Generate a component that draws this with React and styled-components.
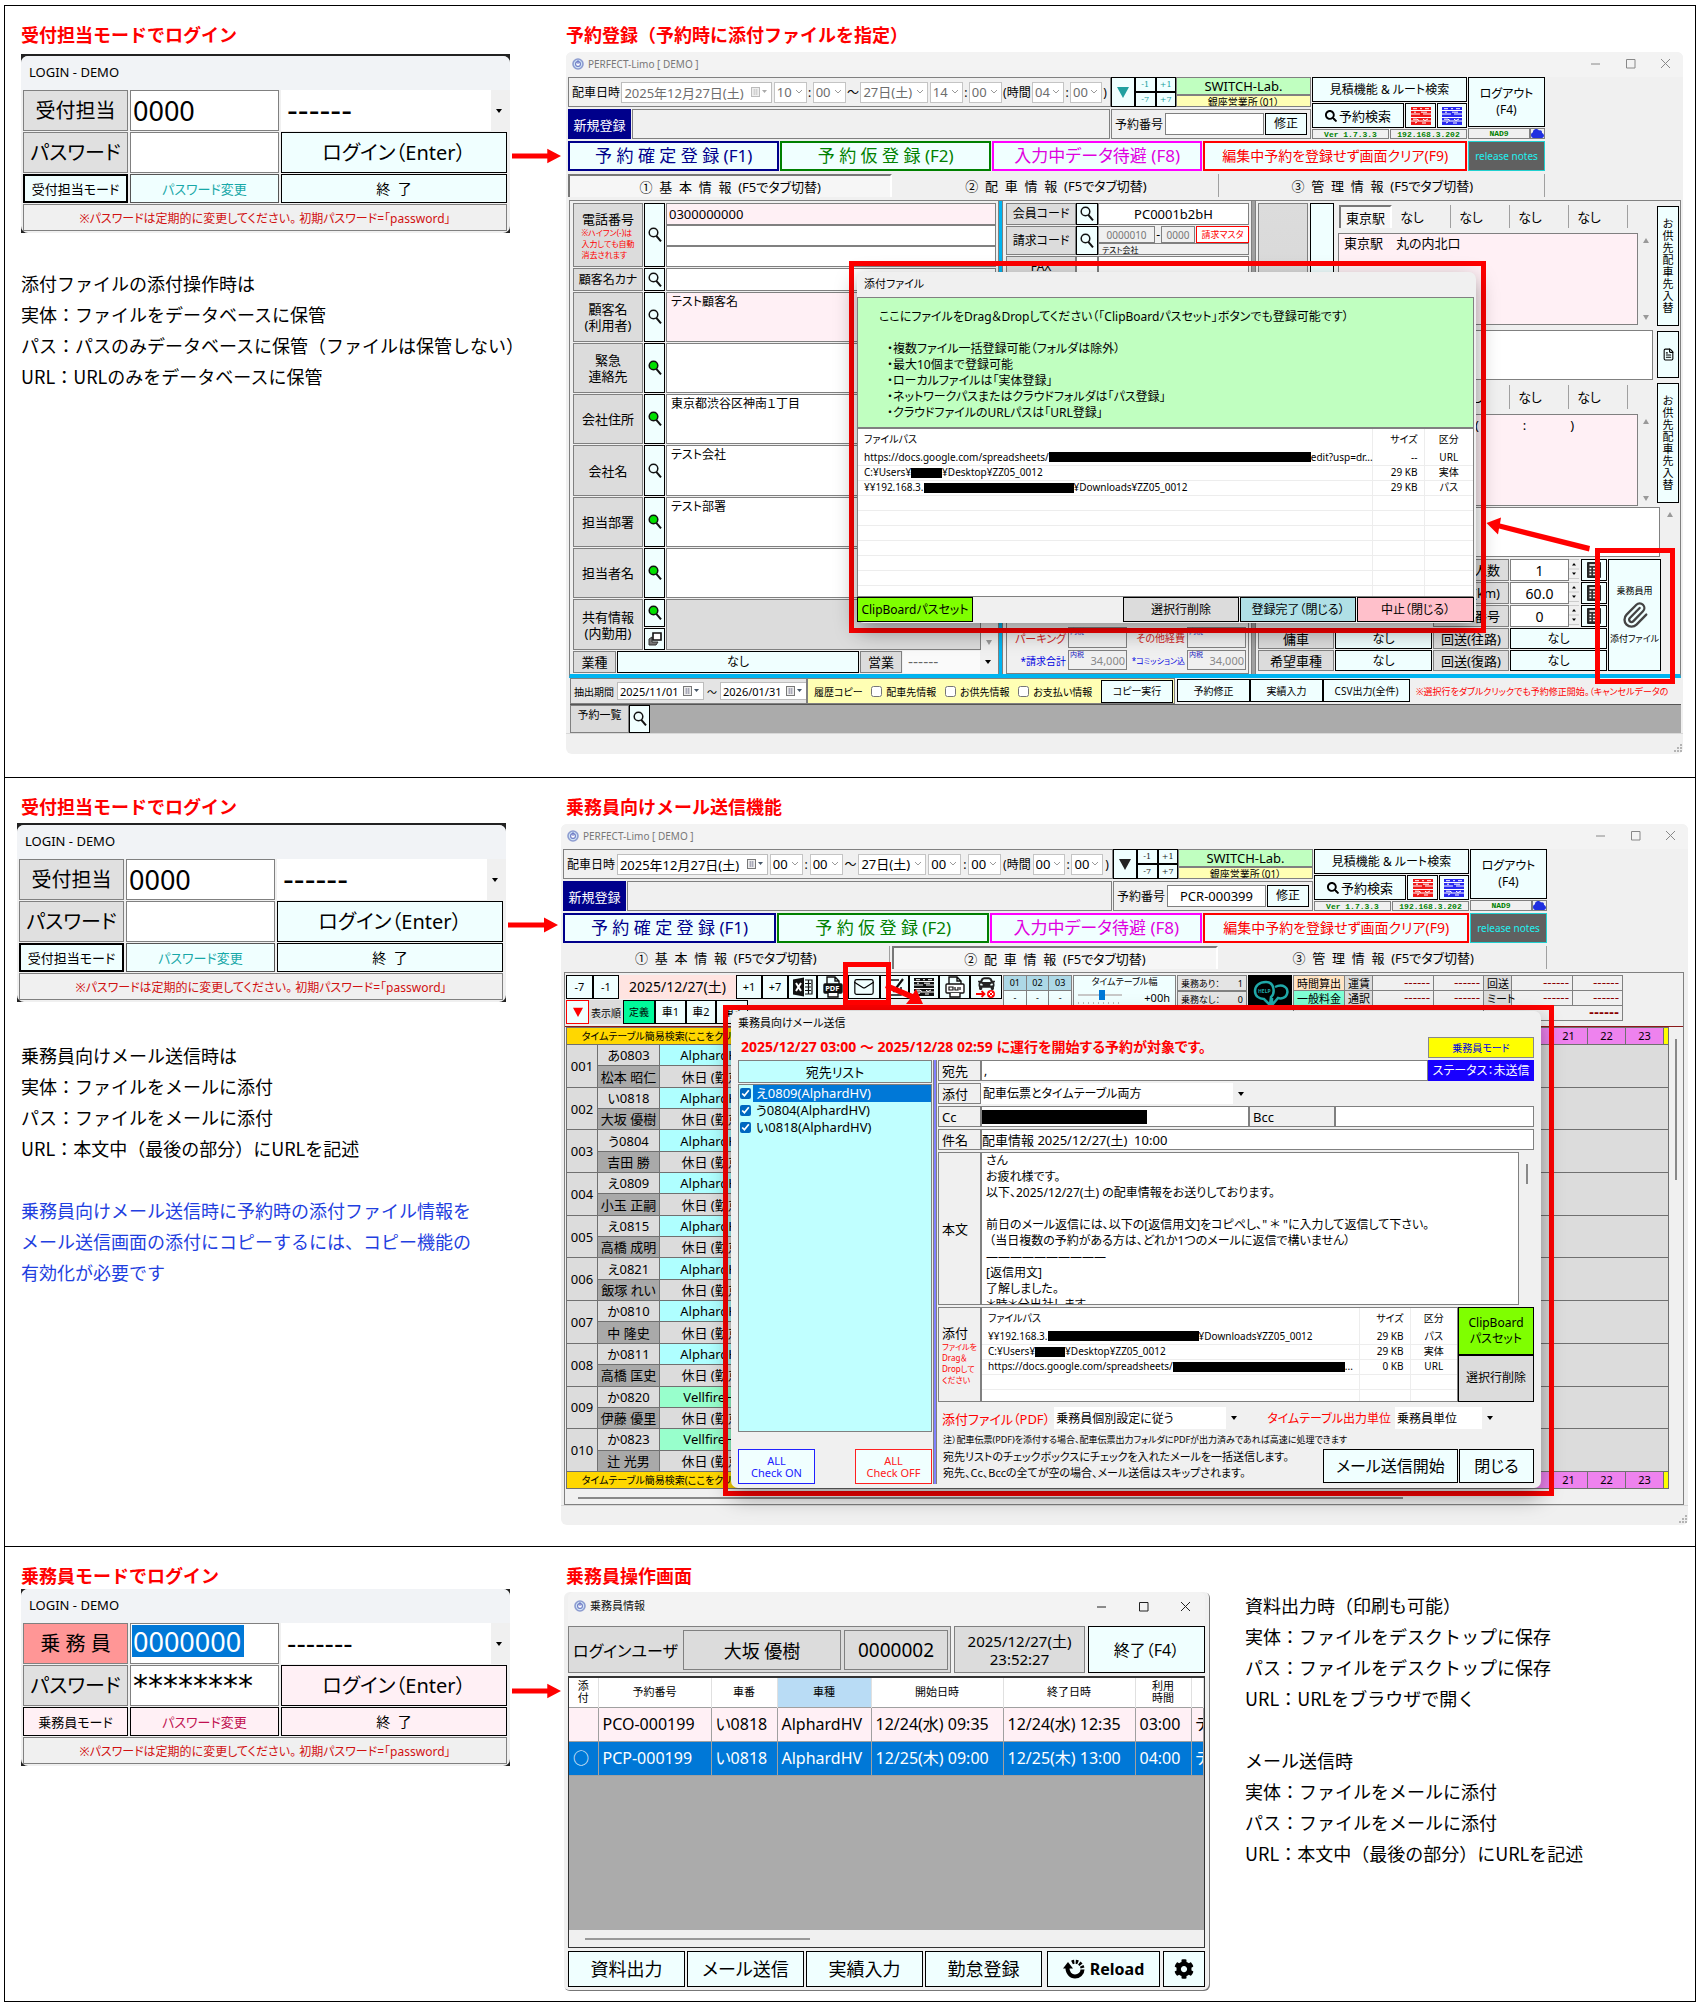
import React from "react";
import styled, { createGlobalStyle, css } from "styled-components";
import { Paperclip, Mail, FileText } from "lucide-react";
import { FaCar, FaCog, FaCloud, FaSearch } from "react-icons/fa";

const UI = `"Noto Sans", "Noto Sans CJK JP", sans-serif`;
const DOC = `"Noto Sans CJK JP", sans-serif`;
const DASH = `"DejaVu Sans", "Noto Sans CJK JP", sans-serif`;

const c = {
  azure: "#f0ffff",
  rose: "#fff0f5",
  face: "#f0f0f0",
  label: "#dcdcdc",
  line: "#808080",
  red: "#ff0000",
  select: "#0078d7",
};

const Global = createGlobalStyle`
  *, *::before, *::after { box-sizing: border-box; }
  body { margin: 0; background: #fff; color: #000; font-family: ${UI}; font-size: 12px; }
  button, input, select, textarea { font: inherit; font-feature-settings: inherit; color: inherit; margin: 0; border-radius: 0; }
  h2, p { margin: 0; }
`;

/* ---------- page ---------- */

const Page = styled.main`
  padding: 5px 7px 6px 4px;
`;
const Sheet = styled.div`
  border: 1px solid #000;
`;
const Section = styled.section`
  display: grid;
  grid-template-columns: 556px minmax(0, 1fr);
  padding-bottom: ${(p) => p.$bottom}px;
  & + & { border-top: 1px solid #000; }
`;
const Side = styled.div`
  padding-left: 16px;
  min-width: 0;
`;
const Stage = styled.div`
  min-width: 0;
`;
const Heading = styled.h2`
  padding: 14px 0 0 ${(p) => p.$indent || 0}px;
  color: ${c.red};
  font: bold 18px/28px ${DOC};
`;
const Notes = styled.div`
  margin-top: ${(p) => p.$top || 0}px;
  font: 18px/31px ${DOC};
`;
const Blue = styled.p`
  margin-top: 31px;
  color: #1f3fe0;
`;
const Gap = styled.p`
  height: 31px;
`;
const LoginLine = styled.div`
  display: flex;
  margin: ${(p) => p.$top}px 0 0 ${(p) => -(p.$outdent || 0)}px;
`;
const ArrowSlot = styled.svg`
  flex: 1;
  min-width: 0;
  height: 16px;
  margin: 94px 0 0 2px;
`;

function RightArrow() {
  return (
    <ArrowSlot viewBox="0 0 50 16" preserveAspectRatio="xMinYMid meet" aria-hidden="true">
      <path d="M0 5.5H36V0.5L50 8L36 15.5V10.5H0Z" fill="#f00" />
    </ArrowSlot>
  );
}

/* ---------- shared controls ---------- */

const Button = styled.button`
  display: flex;
  align-items: center;
  justify-content: center;
  gap: ${(p) => p.$gap || 0}px;
  flex: ${(p) => p.$flex || "none"};
  width: ${(p) => (p.$w ? p.$w + "px" : "auto")};
  min-width: 0;
  padding: 0;
  overflow: hidden;
  white-space: pre;
  text-align: center;
  background: ${(p) => p.$bg || c.azure};
  color: ${(p) => p.$color || "#000"};
  border: ${(p) => p.$bw || 1}px solid ${(p) => p.$border || "#000"};
  font-size: ${(p) => p.$size || 12}px;
  line-height: ${(p) => p.$lh || 16}px;
`;
const Label = styled.label`
  display: flex;
  flex-direction: column;
  align-items: ${(p) => p.$align || "center"};
  justify-content: center;
  flex: none;
  width: ${(p) => (p.$w ? p.$w + "px" : "auto")};
  padding: ${(p) => p.$pad || "0"};
  overflow: hidden;
  white-space: pre;
  text-align: center;
  background: ${(p) => p.$bg || c.label};
  color: ${(p) => p.$color || "#000"};
  border: 1px solid ${(p) => p.$border || c.line};
  font-size: ${(p) => p.$size || 12}px;
  line-height: ${(p) => p.$lh || 16}px;
`;
const Field = styled.input`
  flex: ${(p) => p.$flex || "none"};
  width: ${(p) => (p.$w ? p.$w + "px" : "100%")};
  min-width: 0;
  padding: 0 ${(p) => (p.$pad === undefined ? 2 : p.$pad)}px;
  background: ${(p) => p.$bg || "#fff"};
  color: ${(p) => p.$color || "#000"};
  border: 1px solid ${(p) => p.$border || c.line};
  font-family: ${(p) => p.$font || "inherit"};
  font-size: ${(p) => p.$size || 12}px;
  text-align: ${(p) => p.$align || "left"};
`;
const Area = styled.textarea`
  display: block;
  width: 100%;
  height: 100%;
  min-width: 0;
  padding: ${(p) => p.$pad || "0 4px"};
  resize: none;
  overflow: hidden;
  background: ${(p) => p.$bg || "#fff"};
  border: 1px solid ${c.line};
  font-size: ${(p) => p.$size || 12}px;
  line-height: 16px;
`;
const ComboBox = styled.span`
  position: relative;
  display: flex;
  flex: ${(p) => p.$flex || "none"};
  width: ${(p) => (p.$w ? p.$w + "px" : "auto")};
  height: ${(p) => (p.$h ? p.$h + "px" : "auto")};
  min-width: 0;
  background: ${(p) => p.$bg || "#fff"};
  border: ${(p) => (p.$flat ? "0" : "1px solid #c4c4c4")};
  color: ${(p) => p.$color || "#000"};
  select {
    appearance: none;
    width: 100%;
    border: 0;
    outline: 0;
    opacity: 1;
    background: transparent;
    padding: 0 ${(p) => p.$pad || 2}px;
    font-family: ${(p) => p.$font || "inherit"};
    font-size: ${(p) => p.$size || 13}px;
    color: inherit;
  }
  svg {
    position: absolute;
    right: 3px;
    top: 50%;
    margin-top: -3px;
    pointer-events: none;
  }
`;
const DropCell = styled.span`
  display: flex;
  align-items: center;
  justify-content: center;
  width: 16px;
  flex: none;
  background: ${c.face};
  pointer-events: none;
  svg { position: static; margin: 0; }
`;
function Combo({ value, name, disabled, id, ...style }) {
  return (
    <ComboBox {...style} $color={disabled ? "#6d6d6d" : style.$color}>
      <select id={id} aria-label={id ? undefined : name} disabled={disabled}>
        <option>{value}</option>
      </select>
      {style.$flat ? (
        <DropCell><svg width="6" height="4" viewBox="0 0 6 4" aria-hidden="true"><path d="M0 0H6L3 4Z" fill="#000" /></svg></DropCell>
      ) : (
        <svg width="8" height="6" viewBox="0 0 8 6" aria-hidden="true"><path d="M1 1L4 4L7 1" fill="none" stroke="#999" /></svg>
      )}
    </ComboBox>
  );
}

const Icon = styled.svg`
  display: block;
  flex: none;
`;
function Lens({ fill = "none" }) {
  return (
    <Icon width="14" height="16" viewBox="0 0 14 16" aria-hidden="true">
      <circle cx="5.5" cy="5.5" r="4.3" fill={fill} stroke="#111" strokeWidth="1.5" />
      <path d="M8.3 8.8L13 14.4" stroke="#111" strokeWidth="2" />
    </Icon>
  );
}
function Triangle({ color, size = 12 }) {
  return (
    <Icon width={size} height={size} viewBox="0 0 12 12" aria-hidden="true">
      <path d="M0 1H12L6 12Z" fill={color} />
    </Icon>
  );
}
function CalendarMark({ dim }) {
  return (
    <Icon width="16" height="10" viewBox="0 0 16 10" aria-hidden="true">
      <rect x="0.5" y="0.5" width="8" height="9" fill="#eee" stroke={dim ? "#bbb" : "#777"} />
      <path d="M2 3H7M2 5H7M2 7H7M3.5 2V8M5.5 2V8" stroke={dim ? "#ccc" : "#99a"} strokeWidth="0.7" />
      <path d="M11 3H16L13.5 6Z" fill={dim ? "#aaa" : "#456"} />
    </Icon>
  );
}
function Logo() {
  return (
    <Icon width="12" height="12" viewBox="0 0 12 12" aria-hidden="true">
      <circle cx="6" cy="6" r="5" fill="#cfe3f5" stroke="#8d9cd0" strokeWidth="1.6" />
      <circle cx="6" cy="6" r="2.4" fill="#fff" stroke="#6b78c4" strokeWidth="1.1" />
      <path d="M6 2V6" stroke="#6b78c4" strokeWidth="1" />
    </Icon>
  );
}
function Timetable({ color, size = 20 }) {
  return (
    <Icon width={size} height="18" viewBox="0 0 20 18" aria-hidden="true">
      <rect width="20" height="18" fill={color} />
      <path d="M0 3.5H20M0 7H9M12 7H20M0 10.5H20M0 14H20" stroke="#fff" strokeWidth="1" />
      <path d="M2 1.7H6M9 1.7H11M14 1.7H18M3 5.2H5M10 5.2H16M2 12.2H6L8 13.5M12 12.2L14 13.5L17 12M4 16L6 15M11 16H15" stroke="#fff" strokeWidth="1" fill="none" />
    </Icon>
  );
}
function Calc() {
  return (
    <Icon width="14" height="16" viewBox="0 0 14 16" aria-hidden="true">
      <rect x="0.7" y="0.7" width="12.6" height="14.6" fill="#333" stroke="#000" />
      <path d="M2.5 3H11.5" stroke="#fff" strokeWidth="1.6" />
      <path d="M2.5 6.5H11.5M2.5 9.5H11.5M2.5 12.5H11.5" stroke="#fff" strokeWidth="1.6" strokeDasharray="1.8 1.8" />
    </Icon>
  );
}
function Sheets() {
  return (
    <Icon width="20" height="20" viewBox="0 0 20 20" aria-hidden="true">
      <path d="M0 2.5L11 0.5V19.5L0 17.5Z" fill="#111" />
      <path d="M3 6L8 14M8 6L3 14" stroke="#fff" strokeWidth="2" />
      <path d="M12 3H19V17H12M12 6.5H18M12 10H18M12 13.5H18M15.5 3V17" fill="none" stroke="#111" strokeWidth="1.2" />
    </Icon>
  );
}
function Pages({ printer }) {
  return (
    <Icon width="20" height="22" viewBox="0 0 20 22" aria-hidden="true">
      <path d="M4 9V1H12L16 5V9M12 1V5H16" fill="none" stroke="#111" strokeWidth="1.4" />
      <rect x="1" y="8" width="18" height="9" rx="1" fill={printer ? "#fff" : "#111"} stroke="#111" strokeWidth="1.4" />
      {printer ? (
        <path d="M4 11H8V14H4ZM10 11V14H13V11M15 11V14" fill="none" stroke="#111" strokeWidth="1.2" />
      ) : (
        <text x="2.2" y="15.2" fontSize="7.5" fontWeight="bold" fill="#fff">PDF</text>
      )}
      <path d="M5 17V21H15V17" fill="#fff" stroke="#111" strokeWidth="1.4" />
    </Icon>
  );
}
function Ticked() {
  return (
    <Icon width="20" height="20" viewBox="0 0 20 20" aria-hidden="true">
      <path d="M14 3H2V18H16V10" fill="none" stroke="#111" strokeWidth="1.5" />
      <path d="M5 9L9 14L18 2" fill="none" stroke="#111" strokeWidth="2.2" />
    </Icon>
  );
}

/* ---------- login window ---------- */

const LoginFrame = styled.form`
  flex: none;
  width: 489px;
  padding-top: ${(p) => (p.$crew ? 0 : 2)}px;
  background: #222;
  font-feature-settings: "palt";
`;
const LoginBody = styled.div`
  background: ${c.face};
  border-radius: 7px;
  padding: 0 3px 2px 2px;
  overflow: hidden;
`;
const LoginTitle = styled.div`
  height: 34px;
  margin: 0 -3px 0 -2px;
  padding: 0 8px 3px;
  display: flex;
  align-items: center;
  background: #f1f3f6;
  font-size: 13px;
`;
const LoginGrid = styled.div`
  display: grid;
  grid-template-columns: 105px 149px minmax(0, 1fr);
  grid-template-rows: 41px 41px 29px 27px;
  gap: 1px 2px;
`;
const LoginNote = styled.p`
  grid-column: 1 / -1;
  display: flex;
  align-items: center;
  justify-content: center;
  border: 1px solid ${c.line};
  color: #d01010;
  font-size: 12px;
  white-space: pre;
`;
const Selected = styled.div`
  border: 1px solid ${c.line};
  background: #fff;
  padding: 1px 1px 6px;
  display: flex;
  input {
    width: 112px;
    height: 32px;
    border: 0;
    padding: 0 1px;
    background: ${c.select};
    color: #fff;
    font-size: 27px;
  }
`;

function Login({ crew, id }) {
  const bg = crew ? c.rose : c.azure;
  return (
    <LoginFrame $crew={crew}>
      <LoginBody>
        <LoginTitle>LOGIN - DEMO</LoginTitle>
        <LoginGrid>
          <Label htmlFor={id + "-user"} $size={20} $lh={30} $bg={crew ? "#ff9696" : "#e0e0e0"}>{crew ? "乗 務 員" : "受付担当"}</Label>
          {crew ? (
            <Selected><input id={id + "-user"} defaultValue="0000000" /></Selected>
          ) : (
            <Field id={id + "-user"} $size={27} defaultValue="0000" />
          )}
          <Combo $flat $size={crew ? 26 : 30} $pad={6} $font={DASH} name="担当者" value={crew ? "-------" : "------"} />
          <Label htmlFor={id + "-pass"} $size={20} $lh={30} $bg="#e0e0e0">パスワード</Label>
          <Field id={id + "-pass"} $size={30} $font={DASH} defaultValue={crew ? "********" : ""} />
          <Button type="button" $bg={bg} $size={20} $lh={30}>ログイン（Enter）</Button>
          <Button type="button" $bg={bg} $size={13} $bw={crew ? 1 : 2}>{crew ? "乗務員モード" : "受付担当モード"}</Button>
          <Button type="button" $bg={bg} $size={13} $color={crew ? "#c01050" : "#18a8a8"} $border={crew ? "#000" : "#555"}>パスワード変更</Button>
          <Button type="button" $bg={bg} $size={14}>終  了</Button>
          <LoginNote>※パスワードは定期的に変更してください。 初期パスワード=「password」</LoginNote>
        </LoginGrid>
      </LoginBody>
    </LoginFrame>
  );
}

/* ---------- application window ---------- */

const AppWindow = styled.div`
  position: relative;
  margin: ${(p) => p.$m};
  background: ${c.face};
  border-radius: 6px;
  font-feature-settings: "palt";
`;
const TitleBar = styled.div`
  display: flex;
  align-items: center;
  gap: 4px;
  height: ${(p) => p.$h}px;
  padding: 0 ${(p) => p.$right}px ${(p) => p.$drop || 0}px 6px;
  border-radius: 6px 6px 0 0;
  background: #f3f3f3;
  color: ${(p) => p.$color};
  font-size: ${(p) => p.$size || 10}px;
  line-height: 16px;
`;
const Controls = styled.div`
  display: flex;
  margin-left: auto;
  gap: ${(p) => p.$gap}px;
`;
function WinControls({ color, gap = 24 }) {
  return (
    <Controls $gap={gap}>
      {["M1 6H10", "M1.5 1.5H10V10H1.5Z", "M1 1L10 10M10 1L1 10"].map((d) => (
        <Icon key={d} width="11" height="11" viewBox="0 0 11 11" aria-hidden="true">
          <path d={d} fill="none" stroke={color} />
        </Icon>
      ))}
    </Controls>
  );
}
const Header = styled.div`
  margin: 0 ${(p) => p.$right}px 0 2px;
`;
const HeaderTop = styled.div`
  display: grid;
  grid-template-columns: minmax(0, 1fr) 155px 77px;
  gap: 1px;
  height: 62px;
`;
const Stack = styled.div`
  display: grid;
  grid-template-rows: ${(p) => p.$rows};
  gap: ${(p) => p.$gap || 0}px;
  width: ${(p) => (p.$w ? p.$w + "px" : "auto")};
  flex: ${(p) => p.$flex || "none"};
  min-width: 0;
`;
const Row = styled.div`
  display: flex;
  gap: ${(p) => p.$gap || 0}px;
  min-width: 0;
  align-items: ${(p) => p.$align || "stretch"};
  justify-content: ${(p) => p.$justify || "flex-start"};
  height: ${(p) => (p.$h ? p.$h + "px" : "auto")};
  padding: ${(p) => p.$pad || 0};
  margin: ${(p) => p.$m || 0};
  flex: ${(p) => p.$flex || "none"};
`;
const Panel = styled.div`
  display: flex;
  align-items: center;
  gap: ${(p) => p.$gap || 0}px;
  flex: ${(p) => p.$flex || "none"};
  width: ${(p) => (p.$w ? p.$w + "px" : "auto")};
  min-width: 0;
  padding: ${(p) => p.$pad || "0 3px"};
  overflow: hidden;
  white-space: pre;
  justify-content: ${(p) => p.$justify || "flex-start"};
  background: ${(p) => p.$bg || c.face};
  color: ${(p) => p.$color || "#000"};
  border: 1px solid ${(p) => p.$border || c.line};
  font-size: ${(p) => p.$size || 12}px;
`;
const Plain = styled.span`
  white-space: pre;
  flex: none;
  color: ${(p) => p.$color || "inherit"};
  font-size: ${(p) => (p.$size ? p.$size + "px" : "inherit")};
`;
const FieldLabel = styled.label`
  white-space: pre;
  flex: none;
  font-size: ${(p) => p.$size || 12}px;
  color: ${(p) => p.$color || "inherit"};
`;
const Steps = styled.div`
  display: grid;
  grid-template-columns: 1fr 1fr;
  width: 41px;
  button { font-size: 8px; line-height: 8px; color: ${(p) => p.$color}; font-family: "DejaVu Serif", serif; }
`;
const DateBox = styled.span`
  display: flex;
  align-items: center;
  width: ${(p) => p.$w}px;
  height: ${(p) => p.$h}px;
  flex: none;
  padding-right: 4px;
  background: #fff;
  border: 1px solid #bdbdbd;
  color: ${(p) => (p.$dim ? "#6d6d6d" : "#000")};
  font-size: ${(p) => p.$size}px;
  input { flex: 1; width: 0; padding: 0 2px; border: 0; background: transparent; }
`;
const Tiny = styled(Panel)`
  color: #008000;
  font: bold 8px/9px "Liberation Mono", monospace;
`;
const TabBar = styled.div`
  display: grid;
  grid-template-columns: 1fr 1fr 1fr;
  gap: 2px;
  height: 23px;
  margin-top: 3px;
`;
const Tab = styled.button`
  padding: 0 ${(p) => (p.$on ? 0 : p.$shift || 0)}px 0 0;
  white-space: pre;
  background: ${c.face};
  font-size: ${(p) => p.$size || 13}px;
  line-height: 18px;
  border: 0;
  border-right: 1px solid #a0a0a0;
  ${(p) => p.$on && css`
    background: #f6f6f6;
    border-top: 2px solid #777;
    border-left: 2px solid #777;
    border-right: 2px solid #fff;
  `}
`;

function DateHeader({ id, disabled, hours, number, right }) {
  const accent = disabled ? "#20a0a0" : "#222";
  const box = { $h: 21, disabled };
  return (
    <Header $right={right}>
      <HeaderTop>
        <Stack $rows="30px 30px" $gap={2}>
          <Row>
            <Panel $flex="1" $justify="space-between">
              <FieldLabel htmlFor={id + "-date"} $size={12}>配車日時</FieldLabel>
              <DateBox $w={151} $h={21} $size={13} $dim={disabled}>
                <input id={id + "-date"} defaultValue="2025年12月27日(土)" disabled={disabled} />
                <CalendarMark dim={disabled} />
              </DateBox>
              <Combo {...box} $w={33} name="開始 時" value={hours[0]} />:
              <Combo {...box} $w={33} name="開始 分" value="00" />～
              <Combo {...box} $w={68} name="終了日" value="27日(土)" />
              <Combo {...box} $w={33} name="終了 時" value={hours[1]} />:
              <Combo {...box} $w={33} name="終了 分" value="00" />
              <Plain>(時間</Plain>
              <Combo {...box} $w={32} name="時間" value={hours[2]} />:
              <Combo {...box} $w={32} name="分" value="00" />)
            </Panel>
            <Button type="button" $w={24} aria-label="展開"><Triangle color={accent} /></Button>
            <Steps $color={accent}>
              {["-1", "+1", "-7", "+7"].map((s) => <Button type="button" key={s}>{s}</Button>)}
            </Steps>
            <Stack $rows="18px 12px" $w={135}>
              <Panel $bg="#c0ffc0" $justify="center" $size={13}>SWITCH-Lab.</Panel>
              <Panel $bg="#ffffb4" $justify="center" $size={10}>銀座営業所（01）</Panel>
            </Stack>
          </Row>
          <Row $gap={1}>
            <Panel $w={63} $bg="#00008b" $border="#00008b" $color="#fff" $justify="center" $pad="0" $size={13}>新規登録</Panel>
            <Panel $flex="1" />
            <Panel $w={200} $gap={2} $justify="flex-end">
              <FieldLabel htmlFor={id + "-no"}>予約番号</FieldLabel>
              <Row $h={22} $gap={1}>
                <Field id={id + "-no"} $w={99} $align="center" $size={13} defaultValue={number} />
                <Button type="button" $w={42}>修正</Button>
              </Row>
            </Panel>
          </Row>
        </Stack>
        <Stack $rows="25px 25px 10px" $gap={1}>
          <Button type="button">見積機能 &amp; ルート検索</Button>
          <Row $gap={1}>
            <Button type="button" $flex="1" $gap={2} $size={13}><FaSearch size={12} />予約検索</Button>
            <Button type="button" $w={31} aria-label="配車表（赤）"><Timetable color="#f01818" /></Button>
            <Button type="button" $w={30} aria-label="配車表（青）"><Timetable color="#2828f0" /></Button>
          </Row>
          <Row $gap={1}>
            <Tiny $flex="1" $justify="center" $pad="0">Ver 1.7.3.3</Tiny>
            <Tiny $flex="1" $justify="center" $pad="0">192.168.3.202</Tiny>
          </Row>
        </Stack>
        <Stack $rows="50px 11px" $gap={1}>
          <Button type="button">{"ログアウト\n(F4)"}</Button>
          <Row>
            <Tiny $flex="1" $justify="center" $pad="0">NAD9</Tiny>
            <Tiny $w={15} $pad="0"><FaCloud size={13} color="#2030e0" /></Tiny>
          </Row>
        </Stack>
      </HeaderTop>
      <Row $h={30} $gap={1} $m="2px 0 0">
        <Button type="button" $flex="211" $bw={2} $size={17} $lh={24} $border="#00008b" $color="#00008b">予 約 確 定 登 録 (F1)</Button>
        <Button type="button" $flex="210" $bw={2} $size={17} $lh={24} $border="#008000" $color="#008000">予 約 仮 登 録 (F2)</Button>
        <Button type="button" $flex="210" $bw={2} $size={17} $lh={24} $border="#ff00ff" $color="#e000e0">入力中データ待避 (F8)</Button>
        <Button type="button" $flex="264" $bw={2} $size={14} $lh={24} $border="#ff0000" $color="#ff0000">編集中予約を登録せず画面クリア(F9)</Button>
        <Button type="button" $w={77} $size={10} $bg="#606060" $border="#20d0d0" $color="#20f0f0">release notes</Button>
      </Row>
      <TabBar>
        <Tab type="button" $on={disabled}>①  基  本  情  報  (F5でタブ切替)</Tab>
        <Tab type="button" $on={!disabled}>②  配  車  情  報  (F5でタブ切替)</Tab>
        <Tab type="button">③  管  理  情  報  (F5でタブ切替)</Tab>
      </TabBar>
    </Header>
  );
}

const Status = styled.div`
  display: flex;
  align-items: flex-end;
  justify-content: flex-end;
  height: ${(p) => p.$h}px;
  border-top: 1px solid #d8d8d8;
`;
function StatusBar({ h }) {
  return (
    <Status $h={h}>
      <Icon width="12" height="12" viewBox="0 0 12 12" aria-hidden="true">
        <path d="M9 2h2v2h-2zM6 5h2v2h-2zM9 5h2v2h-2zM3 8h2v2h-2zM6 8h2v2h-2zM9 8h2v2h-2z" fill="#b4b4b4" />
      </Icon>
    </Status>
  );
}

/* ---------- reservation form ---------- */

const Main = styled.div`
  display: grid;
  grid-template-columns: 428px 5px 248px 5px minmax(0, 1fr);
  height: 478px;
  margin: 3px 2px 0 3px;
  border: 1px solid ${c.line};
  border-bottom: 4px solid #00b4f0;
`;
const Bar = styled.div`
  background: ${(p) => p.$bg};
  border: solid ${c.line};
  border-width: 0 1px;
`;
const Customer = styled.div`
  display: grid;
  grid-template-columns: 70px 21px minmax(0, 1fr);
  grid-template-rows: 64px 23px 50px 50px 50px 51px 50px 50px 51px 22px;
  gap: 1px;
  padding: 2px 2px 0 3px;
`;
const Red = styled.small`
  color: ${c.red};
  font-size: 8px;
  line-height: 11px;
  text-align: left;
`;
const Wide = styled.div`
  grid-column: 1 / -1;
  display: flex;
  gap: 1px;
`;
const Shared = styled.div`
  display: grid;
  grid-template-columns: minmax(0, 1fr) 15px;
`;
const ScrollTrack = styled.div`
  display: flex;
  flex-direction: column;
  align-items: center;
  justify-content: space-between;
  padding: 5px 0;
`;
function Scroll({ up = true, down = true }) {
  return (
    <ScrollTrack>
      {up && <Icon width="6" height="5" viewBox="0 0 6 5" aria-hidden="true"><path d="M0 5H6L3 0Z" fill="#999" /></Icon>}
      {down && <Icon width="6" height="5" viewBox="0 0 6 5" aria-hidden="true"><path d="M0 0H6L3 5Z" fill="#999" /></Icon>}
    </ScrollTrack>
  );
}
const SearchButton = ({ green, name }) => (
  <Button type="button" aria-label={name + "を検索"}><Lens fill={green ? "#00e000" : "none"} /></Button>
);

const Billing = styled.div`
  display: flex;
  flex-direction: column;
  gap: 1px;
  padding: 2px 2px 0 3px;
  min-width: 0;
`;
const BillRow = styled.div`
  display: grid;
  grid-template-columns: 70px 22px minmax(0, 1fr);
  height: ${(p) => p.$h}px;
`;
const Totals = styled.div`
  margin-top: auto;
  display: grid;
  grid-template-columns: 61px 59px 60px 59px;
  grid-template-rows: 21px 20px;
  border: 1px solid ${c.line};
  padding: 12px 0 3px;
  row-gap: 2px;
`;
const Money = styled.span`
  position: relative;
  display: flex;
  small { position: absolute; left: 2px; top: 0; font-size: 7px; line-height: 9px; color: #2020c0; }
`;
const MoneyLabel = styled.label`
  align-self: center;
  text-align: right;
  padding-right: 2px;
  white-space: nowrap;
  color: ${(p) => p.$color};
  font-size: ${(p) => p.$size || 10}px;
`;

const Places = styled.div`
  display: flex;
  flex-direction: column;
  gap: 2px;
  padding: 2px 1px 0 2px;
  min-width: 0;
`;
const PlaceGrid = styled.div`
  display: grid;
  grid-template-columns: 50px 24px minmax(0, 1fr) 22px;
  column-gap: 2px;
  height: 302px;
`;
const PlaceList = styled.div`
  display: grid;
  grid-template-rows: 23px 92px 50px 24px 92px;
  row-gap: 5px;
  padding: 2px 2px 0;
`;
const PlaceTabs = styled.div`
  display: flex;
  padding-left: 1px;
  button { width: 59px; }
  button:first-child { width: 53px; }
`;
const SideButtons = styled.div`
  display: grid;
  grid-template-rows: 120px 47px 120px;
  gap: 5px;
  padding-top: 3px;
`;
const Vertical = styled.span`
  width: 12px;
  white-space: normal;
  word-break: break-all;
  font-size: 11px;
  line-height: 12px;
  font-feature-settings: normal;
`;
const Detail = styled.div`
  display: grid;
  grid-template-columns: 76px minmax(0, 1fr) 76px 97px 53px;
  grid-template-rows: 22px 22px 22px 21px 21px;
  gap: 1px;
  margin-right: 18px;
`;
const CountLabel = styled(Label)`
  grid-column: 3;
`;
const Attach = styled(Button)`
  grid-column: 5;
  grid-row: 1 / -1;
  flex-direction: column;
`;
const Count = styled.div`
  grid-column: 4;
  display: grid;
  grid-template-columns: 1fr 12px 26px;
`;
function Spin() {
  return (
    <Icon width="10" height="20" viewBox="0 0 10 20" aria-hidden="true">
      <path d="M0 0.5H10M0 10H10M0 19.5H10" stroke="#ccc" />
      <path d="M3 6.5H7L5 4ZM3 13.5H7L5 16Z" fill="#000" />
    </Icon>
  );
}

const FilterBar = styled.div`
  display: flex;
  height: 27px;
  margin: 0 2px 0 4px;
  border-bottom: 1px solid #555;
  font-size: 10px;
`;
const Check = styled.label`
  display: flex;
  align-items: center;
  gap: 4px;
  font-size: 10px;
  input { width: 11px; height: 11px; }
`;
const ListBar = styled.div`
  display: flex;
  height: 28px;
  margin: 0 2px 0 4px;
  background: #ababab;
`;

/* ---------- red call-outs ---------- */

const Callout = styled.div`
  position: absolute;
  left: ${(p) => p.$x}px;
  top: ${(p) => p.$y}px;
  width: ${(p) => p.$w}px;
  height: ${(p) => p.$h}px;
  padding: ${(p) => p.$pad || 0};
  border: 5px solid ${c.red};
  pointer-events: ${(p) => (p.$pad ? "auto" : "none")};
`;
const CalloutArrow = styled.svg`
  position: absolute;
  left: ${(p) => p.$x}px;
  top: ${(p) => p.$y}px;
`;
const Dialog = styled.div`
  display: flex;
  flex-direction: column;
  height: 100%;
  padding: ${(p) => p.$pad};
  background: ${c.face};
  border-radius: 7px;
  box-shadow: 0 8px 22px rgba(0, 0, 0, 0.4);
`;
const DialogTitle = styled.div`
  height: ${(p) => p.$h}px;
  padding: ${(p) => p.$pad};
  font-size: 11px;
  line-height: 24px;
`;
const Drop = styled.div`
  height: 131px;
  padding: 11px 21px 0;
  background: #c0ffc0;
  border: 1px solid ${c.line};
  font-size: 12px;
  line-height: 16px;
  white-space: pre;
  ul { margin: 16px 0 0 8px; padding: 0; list-style: none; }
`;
const Files = styled.table`
  width: 100%;
  table-layout: fixed;
  border-collapse: collapse;
  background: #fff;
  font-size: 10px;
  line-height: 13px;
  th, td { padding: 0 6px; height: 15px; font-weight: normal; text-align: left; white-space: nowrap; }
  th { height: 21px; }
  th + th, td + td { border-left: 1px solid #ededed; text-align: right; }
  td { border-bottom: 1px solid #ededed; }
  th:last-child, td:last-child { text-align: center; }
`;
const FileBox = styled.div`
  flex: 1;
  min-width: 0;
  overflow: hidden;
  background: #fff;
  border: 1px solid ${c.line};
`;
const PathLine = styled.div`
  display: flex;
  align-items: center;
`;
const Black = styled.span`
  flex: none;
  width: ${(p) => p.$w}px;
  height: ${(p) => p.$h || 10}px;
  background: #000;
`;
function FileTable({ rows, blank, cols }) {
  return (
    <FileBox>
      <Files>
        <colgroup><col /><col width={cols[0]} /><col width={cols[1]} /></colgroup>
        <thead><tr><th>ファイルパス</th><th>サイズ</th><th>区分</th></tr></thead>
        <tbody>
          {rows.map(([head, hide, tail, size, kind]) => (
            <tr key={head}>
              <td><PathLine>{head}<Black $w={hide} />{tail}</PathLine></td>
              <td>{size}</td><td>{kind}</td>
            </tr>
          ))}
          {Array.from({ length: blank }, (_, i) => <tr key={i}><td /><td /><td /></tr>)}
        </tbody>
      </Files>
    </FileBox>
  );
}

function ReservationWindow() {
  const customer = [
    ["会社住所", true, "東京都渋谷区神南１丁目"],
    ["会社名", false, "テスト会社"],
    ["担当部署", true, "テスト部署"],
    ["担当者名", true, ""],
  ];
  return (
    <AppWindow $m="4px 12px 0 5px">
      <TitleBar $h={25} $right={12} $drop={2} $color="#777"><Logo />PERFECT-Limo [ DEMO ]<WinControls color="#888" /></TitleBar>
      <DateHeader id="r1" disabled right={138} hours={["10", "14", "04"]} number="" />
      <Main>
        <Customer>
          <Label htmlFor="r1-tel" $size={13}>電話番号<Red>{"※ハイフン(-)は\n入力しても自動\n消去されます"}</Red></Label>
          <SearchButton name="電話番号" />
          <Stack $rows="22px 21px 21px">
            <Field id="r1-tel" $bg={c.rose} $size={13} defaultValue="0300000000" />
            <Field aria-label="電話番号2" />
            <Field aria-label="電話番号3" />
          </Stack>
          <Label htmlFor="r1-kana">顧客名カナ</Label><SearchButton name="顧客名カナ" /><Field id="r1-kana" />
          <Label htmlFor="r1-name" $size={13}>{"顧客名\n(利用者)"}</Label><SearchButton name="顧客名" /><Area id="r1-name" $bg={c.rose} $pad="1px 4px" defaultValue="テスト顧客名" />
          <Label htmlFor="r1-sos" $size={13}>{"緊急\n連絡先"}</Label><SearchButton green name="緊急連絡先" /><Area id="r1-sos" />
          {customer.map(([name, green, value]) => (
            <React.Fragment key={name}>
              <Label htmlFor={"r1-" + name} $size={13}>{name}</Label>
              <SearchButton green={green} name={name} />
              <Area id={"r1-" + name} $pad="1px 4px" defaultValue={value} />
            </React.Fragment>
          ))}
          <Label htmlFor="r1-share" $size={13}>{"共有情報\n(内勤用)"}</Label>
          <Stack $rows="28px 22px" $gap={1}>
            <SearchButton green name="共有情報" />
            <Button type="button" aria-label="共有情報を開く">
              <Icon width="14" height="14" viewBox="0 0 14 14" aria-hidden="true">
                <path d="M1 7L4 5V10H10L8 13H1Z" fill="#777" stroke="#333" />
                <path d="M5 1H13V8H5Z" fill="#fff" stroke="#111" strokeWidth="1.6" />
              </Icon>
            </Button>
          </Stack>
          <Shared><Area id="r1-share" $bg="#dcdcdc" /><Scroll /></Shared>
          <Wide>
            <Label as="span" $w={43} $size={13}>業種</Label>
            <Button type="button" $flex="1">なし</Button>
            <Label htmlFor="r1-sales" $w={42} $size={13}>営業</Label>
            <Combo id="r1-sales" $flat $w={93} $bg="#fafafa" $color="#666" $font={DASH} $size={14} value="------" $pad={5} />
          </Wide>
        </Customer>
        <Bar $bg="#00b4f0" />
        <Billing>
          <BillRow $h={22}>
            <Label htmlFor="r1-member">会員コード</Label><SearchButton name="会員コード" />
            <Field id="r1-member" $size={13} $align="center" defaultValue="PC0001b2bH" />
          </BillRow>
          <BillRow $h={29}>
            <Label htmlFor="r1-bill">請求コード</Label><SearchButton name="請求コード" />
            <Stack $rows="17px 12px">
              <Row $gap={1}>
                <Field id="r1-bill" $flex="1" $align="center" $size={10} $bg={c.face} $color="#777" defaultValue="0000010" />
                <Plain>-</Plain>
                <Field aria-label="請求コード枝番" $w={34} $align="center" $size={10} $bg={c.face} $color="#777" defaultValue="0000" />
                <Button type="button" $w={53} $bg="#fff" $size={9} $border="#f00" $color="#f00">請求マスタ</Button>
              </Row>
              <Panel $size={8}>テスト会社</Panel>
            </Stack>
          </BillRow>
          <BillRow $h={22}><Label as="span">FAX</Label><Field aria-label="FAX" /><Field aria-label="FAX番号" /></BillRow>
          <Totals>
            <MoneyLabel htmlFor="r1-park" $color="#d02020" $size={11}>パーキング</MoneyLabel>
            <Money><small>内税</small><Field id="r1-park" $bg={c.face} /></Money>
            <MoneyLabel htmlFor="r1-etc" $color="#d02020">その他経費</MoneyLabel>
            <Money><small>内税</small><Field id="r1-etc" $bg={c.face} /></Money>
            <MoneyLabel htmlFor="r1-sum" $color="#0000e0">*請求合計</MoneyLabel>
            <Money><small>内税</small><Field id="r1-sum" $align="right" $size={11} $pad={1} $bg={c.face} $color="#888" defaultValue="34,000" /></Money>
            <MoneyLabel htmlFor="r1-com" $color="#0000e0" $size={8}>*コミッション込</MoneyLabel>
            <Money><small>内税</small><Field id="r1-com" $align="right" $size={11} $pad={1} $bg={c.face} $color="#888" defaultValue="34,000" /></Money>
          </Totals>
        </Billing>
        <Bar $bg="#a0a0a0" />
        <Places>
          <PlaceGrid>
            <Label htmlFor="r1-from" $size={13} $bg="linear-gradient(#dcdcdc,#cfcfcf)">配車先</Label>
            <SearchButton green name="配車先" />
            <PlaceList>
              <PlaceTabs>{["東京駅", "なし", "なし", "なし", "なし"].map((t, i) => <Tab type="button" key={i} $on={i === 0} $shift={18}>{t}</Tab>)}</PlaceTabs>
              <Shared><Area id="r1-from" $bg={c.rose} $size={13} $pad="1px 5px" defaultValue="東京駅　丸の内北口" /><Scroll /></Shared>
              <Area aria-label="配車先メモ" />
              <PlaceTabs>{["", "なし", "なし", "なし", "なし"].map((t, i) => <Tab type="button" key={i} $shift={18}>{t}</Tab>)}</PlaceTabs>
              <Shared><Area aria-label="お供先" $bg={c.rose} $pad="2px 0 0 136px" $size={13} defaultValue={"(             :             )"} /><Scroll /></Shared>
            </PlaceList>
            <SideButtons>
              <Button type="button"><Vertical>お供先配車先入替</Vertical></Button>
              <Button type="button" aria-label="コピー"><FileText size={13} strokeWidth={2} /></Button>
              <Button type="button"><Vertical>お供先配車先入替</Vertical></Button>
            </SideButtons>
          </PlaceGrid>
          <Row $h={50}><Area aria-label="備考" /><Row $flex="0 0 19px" $justify="center"><Scroll down={false} /></Row></Row>
          <Detail>
            {[["人数", "1"], ["(km)", "60.0"], ["番号", "0"]].map(([name, value], i) => (
              <React.Fragment key={name}>
                <CountLabel htmlFor={"r1-n" + i} $align="flex-end" $pad="0 8px 0 0" $size={13}>{name}</CountLabel>
                <Count>
                  <Field id={"r1-n" + i} $align="center" $size={14} defaultValue={value} />
                  <Spin />
                  <Button type="button" aria-label="電卓"><Calc /></Button>
                </Count>
              </React.Fragment>
            ))}
            <Label as="span" $size={13}>傭車</Label><Button type="button">なし</Button><Label as="span" $size={13}>回送(往路)</Label><Button type="button">なし</Button>
            <Label as="span" $size={13}>希望車種</Label><Button type="button">なし</Button><Label as="span" $size={13}>回送(復路)</Label><Button type="button">なし</Button>
            <Attach type="button" $size={9} $gap={2}>乗務員用<Paperclip size={28} strokeWidth={2} color="#444" />添付ファイル</Attach>
          </Detail>
        </Places>
      </Main>
      <FilterBar>
        <Panel $w={237} $gap={3} $bg="#e4e4e4" $size={10}>
          <FieldLabel htmlFor="r1-d1" $size={10}>抽出期間</FieldLabel>
          <DateBox $w={87} $h={18} $size={11}><input id="r1-d1" defaultValue="2025/11/01" /><CalendarMark /></DateBox>～
          <DateBox $w={87} $h={18} $size={11}><input aria-label="抽出期間 終了" defaultValue="2026/01/31" /><CalendarMark /></DateBox>
        </Panel>
        <Panel $w={368} $bg="#ffffb4" $size={10} $justify="space-between" $pad="0 1px 0 6px">
          履歴コピー
          <Check><input type="checkbox" />配車先情報</Check>
          <Check><input type="checkbox" />お供先情報</Check>
          <Check><input type="checkbox" />お支払い情報</Check>
          <Row $h={23}><Button type="button" $w={72} $size={10}>コピー実行</Button></Row>
        </Panel>
        <Row $pad="1px 0 2px 2px">
          <Button type="button" $w={73} $size={10}>予約修正</Button>
          <Button type="button" $w={73} $size={10}>実績入力</Button>
          <Button type="button" $w={87} $size={10}>CSV出力(全件)</Button>
        </Row>
        <Row $align="center" $pad="0 0 0 6px"><Plain $size={9} $color="#f00">※選択行をダブルクリックでも予約修正開始。（キャンセルデータの</Plain></Row>
      </FilterBar>
      <ListBar>
        <Label as="span" $w={59} $size={11} $pad="0 0 8px">予約一覧</Label>
        <Row><Button type="button" $w={21} aria-label="予約一覧を検索"><Lens /></Button></Row>
      </ListBar>
      <StatusBar h={21} />
      <Callout $x={283} $y={209} $w={637} $h={372} $pad="6px 5px 5px 3px">
        <Dialog role="dialog" aria-label="添付ファイル" $pad="0 2px 1px 0">
          <DialogTitle $h={25} $pad="0 7px">添付ファイル</DialogTitle>
          <Drop>
            ここにファイルをDrag＆Dropしてください（「ClipBoardパスセット」ボタンでも登録可能です）
            <ul>
              <li>・複数ファイル一括登録可能（フォルダは除外）</li>
              <li>・最大10個まで登録可能</li>
              <li>・ローカルファイルは「実体登録」</li>
              <li>・ネットワークパスまたはクラウドフォルダは「パス登録」</li>
              <li>・クラウドファイルのURLパスは「URL登録」</li>
            </ul>
          </Drop>
          <FileTable
            blank={7}
            cols={[52, 49]}
            rows={[
              ["https://docs.google.com/spreadsheets/", 262, "edit?usp=dr...", "--", "URL"],
              ["C:¥Users¥", 31, "¥Desktop¥ZZ05_0012", "29 KB", "実体"],
              ["¥¥192.168.3.", 150, "¥Downloads¥ZZ05_0012", "29 KB", "パス"],
            ]}
          />
          <Row $h={25} $gap={1}>
            <Button type="button" $w={116} $bg="#7fff00">ClipBoardパスセット</Button>
            <Row $flex="1" />
            <Button type="button" $w={116} $bg="#dcdcdc">選択行削除</Button>
            <Button type="button" $w={116} $bg="#b0e0e6">登録完了（閉じる）</Button>
            <Button type="button" $w={117} $bg="#ffc0cb">中止（閉じる）</Button>
          </Row>
        </Dialog>
      </Callout>
      <Callout $x={1029} $y={496} $w={80} $h={136} />
      <CalloutArrow $x={920} $y={464} width="104" height="36" viewBox="0 0 104 36" aria-hidden="true">
        <path d="M0.5 7L15 1.5L14 7.5L104 30L103 35.5L13 12.5L12 18.5Z" fill="#f00" />
      </CalloutArrow>
    </AppWindow>
  );
}

/* ---------- dispatch window ---------- */

const Dispatch = styled.div`
  margin: 3px 4px 0 3px;
  border: 1px solid ${c.line};
  height: 533px;
  display: flex;
  flex-direction: column;
`;
const Toolbar = styled.div`
  display: flex;
  align-items: flex-start;
  gap: 1px;
  height: 54px;
  padding: 2px 1px;
  border-bottom: 1px solid #8b1a1a;
`;
const DayTable = styled.table`
  border-collapse: collapse;
  width: 69px;
  flex: none;
  font-size: 9px;
  line-height: 12px;
  th, td { border: 1px solid ${c.line}; padding: 0; height: 15px; font-weight: normal; text-align: center; background: ${c.azure}; }
  th { background: #add8e6; }
`;
const Width = styled.div`
  width: 103px;
  flex: none;
  height: 34px;
  background: ${c.azure};
  border: 1px solid ${c.line};
  font-size: 9px;
  line-height: 12px;
  text-align: center;
  display: grid;
  grid-template-columns: 50px 1fr;
  label { grid-column: 1 / -1; }
  input {
    appearance: none;
    width: 44px;
    height: 16px;
    margin-left: 4px;
    background: linear-gradient(#c8c8c8, #c8c8c8) 0 5px / 100% 2px no-repeat, repeating-linear-gradient(90deg, #bbb 0 1px, transparent 1px 5px) 0 13px / 100% 2px no-repeat;
  }
  input::-webkit-slider-thumb { appearance: none; width: 6px; height: 10px; margin-top: -4px; background: ${c.select}; }
  output { font-size: 11px; line-height: 18px; text-align: right; padding-right: 5px; }
`;
const Rates = styled.table`
  flex: none;
  border-collapse: collapse;
  table-layout: fixed;
  width: 329px;
  font-size: 11px;
  line-height: 13px;
  th, td { border: 1px solid ${c.line}; padding: 0 3px; height: 15px; font-weight: normal; text-align: center; white-space: nowrap; }
  td { text-align: right; color: #8b0000; font-family: ${DASH}; font-size: 12px; }
`;
const RateHead = styled.th`
  background: ${(p) => p.$bg || "#dcdcdc"};
`;
const Board = styled.div`
  display: flex;
  flex: 1;
  min-height: 0;
  padding-left: 1px;
`;
const BoardTable = styled.table`
  flex: 1;
  width: 0;
  height: 462px;
  table-layout: fixed;
  border-collapse: collapse;
  font-size: 13px;
  line-height: 16px;
  text-align: center;
  th, td { padding: 0; font-weight: normal; border: 1px solid #707070; white-space: nowrap; }
  thead th, tfoot th { height: 17px; font-size: 10px; background: #ee82ee; line-height: 14px; }
  thead th.search, tfoot th.search { background: #ffd700; }
  thead th.edge, tfoot th.edge { background: #ff0; }
  thead th.hour, tfoot th.hour { font-size: 11px; }
`;
const Td = styled.td`
  background: ${(p) => p.$bg || "#dcdcdc"};
`;
const VScroll = styled.div`
  width: 14px;
  flex: none;
  display: flex;
  justify-content: center;
  padding-top: 12px;
  &::before { content: ""; width: 2px; height: 141px; background: #888; }
`;
const HScroll = styled.div`
  height: 15px;
  padding: 8px 280px 0 13px;
  &::before { content: ""; display: block; height: 2px; background: #888; }
`;

function BoardEdge({ foot }) {
  const T = foot ? "tfoot" : "thead";
  return (
    <T>
      <tr>
        <th className="search" colSpan={3}>タイムテーブル簡易検索(ここをクリック)</th>
        <th />
        <th className="hour">21</th><th className="hour">22</th><th className="hour">23</th><th className="edge" />
      </tr>
    </T>
  );
}

const MailTop = styled.div`
  display: flex;
  align-items: stretch;
  justify-content: space-between;
  height: 21px;
  padding-left: 3px;
  strong { color: ${c.red}; font-size: 14px; line-height: 20px; white-space: pre; }
`;
const MailBody = styled.div`
  display: grid;
  grid-template-columns: 194px 4px minmax(0, 1fr);
  gap: 1px;
  margin-top: 2px;
`;
const MailList = styled.div`
  display: grid;
  grid-template-rows: 23px 348px 51px;
  row-gap: 1px;
`;
const Targets = styled.div`
  background: #c0ffff;
  border: 1px solid ${c.line};
`;
const Target = styled.label`
  display: flex;
  align-items: center;
  gap: 1px;
  height: 17px;
  font-size: 13px;
  input { width: 11px; height: 11px; margin: 0 1px; accent-color: #0067c0; }
  span { flex: 1; padding-left: 3px; line-height: 17px; ${(p) => p.$on && `background: ${c.select}; color: #fff;`} }
`;
const Form = styled.div`
  display: flex;
  flex-direction: column;
  gap: 2px;
  min-width: 0;
`;
const Line = styled.div`
  display: grid;
  grid-template-columns: ${(p) => p.$cols || "43px minmax(0, 1fr)"};
  height: ${(p) => p.$h || 21}px;
`;
const FormLabel = styled(Label)`
  background: ${c.face};
  align-items: flex-start;
  padding: 0 3px;
  font-size: 13px;
`;
const CcBox = styled.div`
  display: flex;
  align-items: center;
  border: 1px solid ${c.line};
  background: #fff;
`;
const ThumbCell = styled.div`
  padding: 12px 0 0 7px;
  &::before { content: ""; display: block; width: 2px; height: 20px; background: #888; }
`;
const Foot = styled.div`
  padding-left: 5px;
  font-size: 11px;
  line-height: 16px;
  white-space: pre;
  small { display: block; font-size: 9px; line-height: 18px; }
`;

const BODY = `さん
お疲れ様です。
以下、2025/12/27(土) の配車情報をお送りしております。

前日のメール返信には、以下の[返信用文]をコピペし、" ＊ "に入力して返信して下さい。
 （当日複数の予約がある方は、どれか1つのメールに返信で構いません）
――――――――――
[返信用文]
了解しました。
＊時＊分出社します`;

const HelpMark = () => (
  <Icon width="44" height="34" viewBox="0 0 44 34" aria-hidden="true">
    <rect width="44" height="34" fill="#000" />
    <path d="M18 7C11 7 7 11 7 16C7 21 11 24 16 24L22 30L23 22C27 19 27 7 18 7Z" fill="none" stroke="#20a8a8" strokeWidth="2.5" />
    <path d="M27 12C35 8 41 13 39 19C38 23 33 24 30 23L24 30V23" fill="none" stroke="#20a8a8" strokeWidth="2.5" />
    <text x="10" y="18" fontSize="5" fontWeight="bold" fill="#20a8a8">HELP</text>
  </Icon>
);

function DispatchWindow() {
  const drivers = [
    ["あ0803", "松本 昭仁"], ["い0818", "大坂 優樹"], ["う0804", "吉田 勝"], ["え0809", "小玉 正嗣"], ["え0815", "高橋 成明"],
    ["え0821", "飯塚 れい"], ["か0810", "中 隆史"], ["か0811", "高橋 匡史"], ["か0820", "伊藤 優里"], ["か0823", "辻 光男"],
  ];
  const tools = [
    ["Excel出力", 29, <Sheets />],
    ["PDF出力", 31, <Pages />],
    ["メール送信", 32, <Mail size={22} strokeWidth={1.3} />],
    ["チェック", 29, <Ticked />],
    ["時刻表", 30, <Timetable color="#111" />],
    ["印刷", 31, <Pages printer />],
  ];
  return (
    <AppWindow $m="4px 7px 0 0">
      <TitleBar $h={25} $right={12} $drop={2} $color="#777"><Logo />PERFECT-Limo [ DEMO ]<WinControls color="#888" /></TitleBar>
      <DateHeader id="r2" right={141} hours={["00", "00", "00"]} number="PCR-000399" />
      <Dispatch>
        <Toolbar>
          <Stack $rows="24px 24px" $gap={1} $w={436}>
            <Row>
              <Button type="button" $w={27} $size={11}>-7</Button>
              <Button type="button" $w={26} $size={11}>-1</Button>
              <Button type="button" $w={117} $size={14} $bg="#ffe4e1" $border="#ffe4e1">2025/12/27(土)</Button>
              <Button type="button" $w={26} $size={11}>+1</Button>
              <Button type="button" $w={26} $size={11}>+7</Button>
              {tools.map(([name, w, icon]) => <Button type="button" key={name} $w={w} aria-label={name}>{icon}</Button>)}
              <Button type="button" $flex="1" aria-label="車両">
                <Icon width="24" height="22" viewBox="0 0 24 22" aria-hidden="true">
                  <FaCar x={4} y={-1} size={17} color="#222" />
                  <path d="M2 18H10M7.5 15L10.5 18L7.5 21" stroke="#f00" strokeWidth="1.8" fill="none" />
                  <circle cx="17" cy="18" r="3.2" fill="#fff" stroke="#f00" strokeWidth="1.5" />
                  <path d="M15 16L19 20M19 16L15 20" stroke="#f00" />
                </Icon>
              </Button>
            </Row>
            <Row>
              <Button type="button" $w={23} $border="#f00" aria-label="並び替え"><Triangle color="#f00" size={10} /></Button>
              <Panel $w={34} $bg="#dcdcdc" $pad="0" $size={10} $border="#dcdcdc" $justify="center">表示順</Panel>
              <Button type="button" $w={32} $size={10} $bg="#00fa9a">定義</Button>
              <Button type="button" $w={31} $size={11}>車1</Button>
              <Button type="button" $w={30} $size={11}>車2</Button>
              <Button type="button" $w={32} $size={11}>車3</Button>
            </Row>
          </Stack>
          <DayTable>
            <thead><tr><th>01</th><th>02</th><th>03</th></tr></thead>
            <tbody><tr><td>-</td><td>-</td><td>-</td></tr></tbody>
          </DayTable>
          <Width>
            <label htmlFor="r2-width">タイムテーブル幅</label>
            <input id="r2-width" type="range" defaultValue="55" />
            <output>+00h</output>
          </Width>
          <Stack $rows="16px 16px" $w={70}>
            <Panel $size={9} $bg="#e4e4e4" $justify="space-between"><span>乗務あり：</span><span>1</span></Panel>
            <Panel $size={9} $bg="#e4e4e4" $justify="space-between"><span>乗務なし：</span><span>0</span></Panel>
          </Stack>
          <HelpMark />
          <Rates>
            <colgroup><col width="51" /><col width="28" /><col width="61" /><col width="50" /><col width="28" /><col width="61" /><col width="50" /></colgroup>
            <tbody>
              <tr><RateHead $bg="#ffe4c4">時間算出</RateHead><RateHead>運賃</RateHead><td>------</td><td>------</td><RateHead>回送</RateHead><td>------</td><td>------</td></tr>
              <tr><RateHead $bg="#7fffd4">一般料金</RateHead><RateHead>通訳</RateHead><td>------</td><td>------</td><RateHead>ミート</RateHead><td>------</td><td>------</td></tr>
              <tr><td colSpan={4} /><td colSpan={3}><b>------</b></td></tr>
            </tbody>
          </Rates>
        </Toolbar>
        <Board>
          <BoardTable>
            <colgroup><col width="31" /><col width="62" /><col width="107" /><col /><col width="38" /><col width="38" /><col width="38" /><col width="5" /></colgroup>
            <BoardEdge />
            <tbody>
              {drivers.map(([car, name], i) => (
                <React.Fragment key={car}>
                  <tr>
                    <Td rowSpan={2}>{String(i + 1).padStart(3, "0")}</Td>
                    <Td>{car}</Td>
                    <Td $bg={i > 7 ? "#98ffcc" : "#afffff"}>{i > 7 ? "VellfireHV" : "AlphardHV"}</Td>
                    <Td rowSpan={2} colSpan={5} />
                  </tr>
                  <tr><Td $bg="#a9a9a9">{name}</Td><Td>休日 (勤怠)</Td></tr>
                </React.Fragment>
              ))}
            </tbody>
            <BoardEdge foot />
          </BoardTable>
          <VScroll />
        </Board>
        <HScroll />
      </Dispatch>
      <StatusBar h={20} />
      <Callout $x={162} $y={181} $w={831} $h={491} $pad="1px 8px 3px 3px">
        <Dialog role="dialog" aria-label="乗務員向けメール送信" $pad="0 7px 0 7px">
          <DialogTitle $h={26} $pad="0">乗務員向けメール送信</DialogTitle>
          <MailTop>
            <strong>2025/12/27 03:00 ～ 2025/12/28 02:59 に運行を開始する予約が対象です。</strong>
            <Button type="button" $w={106} $size={10} $bg="#ff0" $border="#888" $color="#0000e0">乗務員モード</Button>
          </MailTop>
          <MailBody>
            <MailList>
              <Panel $bg="#c0ffff" $justify="center" $size={13}>宛先リスト</Panel>
              <Targets>
                {["え0809(AlphardHV)", "う0804(AlphardHV)", "い0818(AlphardHV)"].map((t, i) => (
                  <Target key={t} $on={i === 0}><input type="checkbox" defaultChecked /><span>{t}</span></Target>
                ))}
              </Targets>
              <Row $justify="space-between" $pad="16px 0 0">
                <Button type="button" $w={77} $size={11} $lh={12} $border="#2020ff" $color="#2020ff">{"ALL\nCheck ON"}</Button>
                <Button type="button" $w={77} $size={11} $lh={12} $border="#ff2020" $color="#ff2020">{"ALL\nCheck OFF"}</Button>
              </Row>
            </MailList>
            <Bar $bg="#8080ff" />
            <Form>
              <Line $cols="43px minmax(0, 1fr) 106px">
                <FormLabel htmlFor="m-to">宛先</FormLabel>
                <Field id="m-to" defaultValue="," />
                <Button type="button" $bg="#1800ff" $border="#1800ff" $color="#fff">ステータス：未送信</Button>
              </Line>
              <Line $cols="43px 268px">
                <FormLabel htmlFor="m-att">添付</FormLabel>
                <Combo id="m-att" $flat $size={12} value="配車伝票とタイムテーブル両方" />
              </Line>
              <Line $cols="43px 268px 86px minmax(0, 1fr)">
                <FormLabel as="span">Cc</FormLabel>
                <CcBox><Black $w={165} $h={14} /></CcBox>
                <FormLabel htmlFor="m-bcc">Bcc</FormLabel>
                <Field id="m-bcc" />
              </Line>
              <Line>
                <FormLabel htmlFor="m-sub">件名</FormLabel>
                <Field id="m-sub" $size={13} $pad={0} defaultValue="配車情報 2025/12/27(土)  10:00" />
              </Line>
              <Line $h={153} $cols="43px minmax(0, 1fr) 15px">
                <FormLabel htmlFor="m-body">本文</FormLabel>
                <Area id="m-body" $size={12} defaultValue={BODY} />
                <ThumbCell />
              </Line>
              <Line $h={95} $cols="43px minmax(0, 1fr) 76px">
                <FormLabel as="span">添付<Red>{"ファイルを\nDrag＆\nDropして\nください"}</Red></FormLabel>
                <FileTable
                  blank={2}
                  cols={[51, 47]}
                  rows={[
                    ["¥¥192.168.3.", 151, "¥Downloads¥ZZ05_0012", "29 KB", "パス"],
                    ["C:¥Users¥", 30, "¥Desktop¥ZZ05_0012", "29 KB", "実体"],
                    ["https://docs.google.com/spreadsheets/", 172, "...", "0 KB", "URL"],
                  ]}
                />
                <Stack $rows="1fr 1fr">
                  <Button type="button" $bg="#7fff00">{"ClipBoard\nパスセット"}</Button>
                  <Button type="button" $bg="#dcdcdc">選択行削除</Button>
                </Stack>
              </Line>
              <Row $h={22} $m="3px 36px 0 0" $pad="0 0 0 4px" $align="center" $gap={4}>
                <FieldLabel htmlFor="m-pdf" $size={13} $color="#f00">添付ファイル（PDF）</FieldLabel>
                <Combo id="m-pdf" $flat $w={188} $h={22} $size={12} value="乗務員個別設定に従う" />
                <Row $flex="1" />
                <FieldLabel htmlFor="m-unit" $size={12} $color="#f00">タイムテーブル出力単位</FieldLabel>
                <Combo id="m-unit" $flat $w={103} $h={22} $size={12} value="乗務員単位" />
              </Row>
              <Foot>
                <small>注）配車伝票(PDF)を添付する場合、配車伝票出力フォルダにPDFが出力済みであれば高速に処理できます</small>
                <Row $h={34} $justify="space-between">
                  <div>宛先リストのチェックボックスにチェックを入れたメールを一括送信します。{"\n"}宛先、Cc、Bccの全てが空の場合、メール送信はスキップされます。</div>
                  <Row $gap={1}>
                    <Button type="button" $w={135} $size={16} $lh={24}>メール送信開始</Button>
                    <Button type="button" $w={75} $size={16} $lh={24}>閉じる</Button>
                  </Row>
                </Row>
              </Foot>
            </Form>
          </MailBody>
        </Dialog>
      </Callout>
      <Callout $x={282} $y={138} $w={48} $h={43} />
      <CalloutArrow $x={324} $y={158} width="40" height="24" viewBox="0 0 40 24" aria-hidden="true">
        <path d="M2 1L28 12L31 7L38 22L21 22L25 17L0 6Z" fill="#f00" />
      </CalloutArrow>
    </AppWindow>
  );
}

/* ---------- crew window ---------- */

const CrewLine = styled.div`
  display: flex;
  gap: 35px;
  align-items: flex-start;
`;
const CrewWindow = styled(AppWindow)`
  width: 646px;
  flex: none;
  padding: 0 5px 4px 4px;
  box-shadow: inset -1px -1px 0 #777;
`;
const Grid = styled.div`
  margin-top: 3px;
  height: 272px;
  border: 1px solid #333;
  border-top-width: 2px;
  overflow: hidden;
  background: #ababab;
  display: flex;
  flex-direction: column;
  justify-content: space-between;
`;
const Trips = styled.table`
  table-layout: fixed;
  border-collapse: collapse;
  width: 100%;
  background: #fff;
  font-size: 16px;
  line-height: 20px;
  th { height: 29px; padding: 0; font-size: 11px; line-height: 12px; font-weight: normal; border-right: 1px solid #e0e0e0; white-space: pre; }
  th.sorted { background: #b9dcf5; }
  td { height: 34px; padding: 0 0 0 4px; border: 1px solid #a0a0a0; border-left: 0; white-space: nowrap; overflow: hidden; }
`;
const Trip = styled.tr`
  background: ${(p) => (p.$on ? c.select : c.rose)};
  color: ${(p) => (p.$on ? "#fff" : "#000")};
`;
const Track = styled.div`
  height: 17px;
  padding: 8px 0 0 16px;
  background: ${c.face};
  &::before { content: ""; display: block; width: 225px; height: 2px; background: #999; }
`;

function CrewPanel() {
  return (
    <CrewWindow $m="3px 0 0 3px">
      <TitleBar $h={34} $right={14} $drop={6} $size={11} $color="#111"><Logo /><span>乗務員情報</span><WinControls color="#222" gap={31} /></TitleBar>
      <Row $h={47} $gap={3}>
        <Panel $flex="1" $bg="#dcdcdc" $size={16} $pad="2px" $gap={3}>
          <Row $flex="1" $justify="center">ログインユーザ</Row>
          <Row $h={40} $gap={3}>
            <Panel $w={158} $bg="#dcdcdc" $size={18} $justify="center">大坂 優樹</Panel>
            <Panel $w={104} $bg="#dcdcdc" $size={19} $justify="center">0000002</Panel>
          </Row>
        </Panel>
        <Label as="span" $w={131} $size={15} $lh={18}>{"2025/12/27(土)\n23:52:27"}</Label>
        <Button type="button" $w={117} $size={16} $lh={24}>終了（F4）</Button>
      </Row>
      <Grid>
        <Trips>
          <colgroup><col width="29" /><col width="113" /><col width="66" /><col width="94" /><col width="132" /><col width="132" /><col width="56" /><col /></colgroup>
          <thead>
            <tr><th>{"添\n付"}</th><th>予約番号</th><th>車番</th><th className="sorted">車種</th><th>開始日時</th><th>終了日時</th><th>{"利用\n時間"}</th><th /></tr>
          </thead>
          <tbody>
            <Trip><td /><td>PCO-000199</td><td>い0818</td><td>AlphardHV</td><td>12/24(水) 09:35</td><td>12/24(水) 12:35</td><td>03:00</td><td>テ</td></Trip>
            <Trip $on><td>○</td><td>PCP-000199</td><td>い0818</td><td>AlphardHV</td><td>12/25(木) 09:00</td><td>12/25(木) 13:00</td><td>04:00</td><td>テ</td></Trip>
          </tbody>
        </Trips>
        <Track />
      </Grid>
      <Row $h={36} $gap={2} $m="3px 0 0">
        {["資料出力", "メール送信", "実績入力", "勤怠登録"].map((t) => <Button type="button" key={t} $flex="1" $size={18} $lh={24}>{t}</Button>)}
        <Row $m="0 1px 0 3px">
          <Button type="button" $w={113} $size={16} $lh={24} $gap={5}>
            <Icon width="22" height="20" viewBox="0 0 22 20" aria-hidden="true">
              <path d="M4.5 8C4 14 8 17.5 12 17.5C16 17.5 19.5 14.5 19.5 10.5" fill="none" stroke="#000" strokeWidth="4" />
              <path d="M0 9.5L5 3L10 9.5Z" fill="#000" />
              <path d="M9 3.5C13 1.5 18 3.5 19.5 9" fill="none" stroke="#000" strokeWidth="4" strokeDasharray="2.4 1.4" />
            </Icon>
            <b>Reload</b>
          </Button>
        </Row>
        <Button type="button" $w={42} aria-label="設定"><FaCog size={20} /></Button>
      </Row>
    </CrewWindow>
  );
}

export default function App() {
  return (
    <Page>
      <Global />
      <Sheet>
        <Section $bottom={23}>
          <Side>
            <Heading>受付担当モードでログイン</Heading>
            <LoginLine $top={6}><Login id="l1" /><RightArrow /></LoginLine>
            <Notes $top={35}>
              <p>添付ファイルの添付操作時は</p>
              <p>実体：ファイルをデータベースに保管</p>
              <p>パス：パスのみデータベースに保管（ファイルは保管しない）</p>
              <p>URL：URLのみをデータベースに保管</p>
            </Notes>
          </Side>
          <Stage>
            <Heading $indent={5}>予約登録（予約時に添付ファイルを指定）</Heading>
            <ReservationWindow />
          </Stage>
        </Section>
        <Section $bottom={21}>
          <Side>
            <Heading>受付担当モードでログイン</Heading>
            <LoginLine $top={3} $outdent={4}><Login id="l2" /><RightArrow /></LoginLine>
            <Notes $top={38}>
              <p>乗務員向けメール送信時は</p>
              <p>実体：ファイルをメールに添付</p>
              <p>パス：ファイルをメールに添付</p>
              <p>URL：本文中（最後の部分）にURLを記述</p>
              <Blue>乗務員向けメール送信時に予約時の添付ファイル情報を<br />メール送信画面の添付にコピーするには、コピー機能の<br />有効化が必要です</Blue>
            </Notes>
          </Side>
          <Stage>
            <Heading $indent={5}>乗務員向けメール送信機能</Heading>
            <DispatchWindow />
          </Stage>
        </Section>
        <Section $bottom={10}>
          <Side>
            <Heading>乗務員モードでログイン</Heading>
            <LoginLine $top={0}><Login id="l3" crew /><RightArrow /></LoginLine>
          </Side>
          <Stage>
            <Heading $indent={5}>乗務員操作画面</Heading>
            <CrewLine>
              <CrewPanel />
              <Notes $top={1}>
                <p>資料出力時（印刷も可能）</p>
                <p>実体：ファイルをデスクトップに保存</p>
                <p>パス：ファイルをデスクトップに保存</p>
                <p>URL：URLをブラウザで開く</p>
                <Gap />
                <p>メール送信時</p>
                <p>実体：ファイルをメールに添付</p>
                <p>パス：ファイルをメールに添付</p>
                <p>URL：本文中（最後の部分）にURLを記述</p>
              </Notes>
            </CrewLine>
          </Stage>
        </Section>
      </Sheet>
    </Page>
  );
}
